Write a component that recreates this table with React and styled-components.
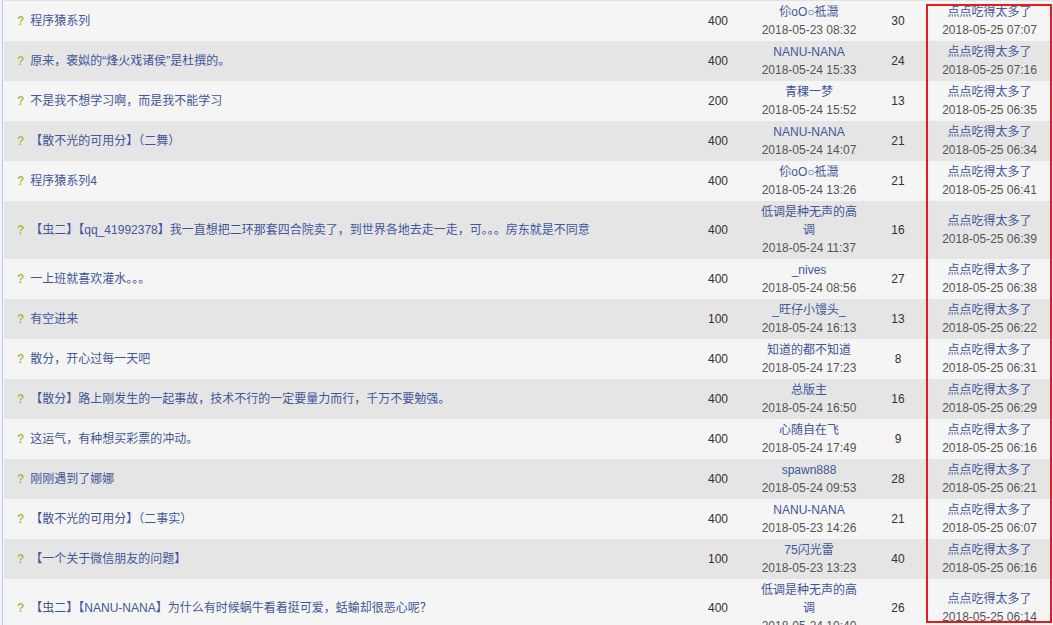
import React from "react";
import styled, { createGlobalStyle } from "styled-components";

const topics = [
  { title: "程序猿系列", points: 400, user: "伱oO○祗灊", time: "2018-05-23 08:32", replies: 30, last: "07:07" },
  { title: "原来，褒姒的“烽火戏诸侯”是杜撰的。", points: 400, user: "NANU-NANA", time: "2018-05-24 15:33", replies: 24, last: "07:16" },
  { title: "不是我不想学习啊，而是我不能学习", points: 200, user: "青稞一梦", time: "2018-05-24 15:52", replies: 13, last: "06:35" },
  { title: "【散不光的可用分】（二舞）", points: 400, user: "NANU-NANA", time: "2018-05-24 14:07", replies: 21, last: "06:34" },
  { title: "程序猿系列4", points: 400, user: "伱oO○祗灊", time: "2018-05-24 13:26", replies: 21, last: "06:41" },
  { title: "【虫二】【qq_41992378】我一直想把二环那套四合院卖了，到世界各地去走一走，可。。。房东就是不同意", points: 400, user: "低调是种无声的高调", time: "2018-05-24 11:37", replies: 16, last: "06:39" },
  { title: "一上班就喜欢灌水。。。", points: 400, user: "_nives", time: "2018-05-24 08:56", replies: 27, last: "06:38" },
  { title: "有空进来", points: 100, user: "_旺仔小馒头_", time: "2018-05-24 16:13", replies: 13, last: "06:22" },
  { title: "散分，开心过每一天吧", points: 400, user: "知道的都不知道", time: "2018-05-24 17:23", replies: 8, last: "06:31" },
  { title: "【散分】路上刚发生的一起事故，技术不行的一定要量力而行，千万不要勉强。", points: 400, user: "总版主", time: "2018-05-24 16:50", replies: 16, last: "06:29" },
  { title: "这运气，有种想买彩票的冲动。", points: 400, user: "心随自在飞", time: "2018-05-24 17:49", replies: 9, last: "06:16" },
  { title: "刚刚遇到了娜娜", points: 400, user: "spawn888", time: "2018-05-24 09:53", replies: 28, last: "06:21" },
  { title: "【散不光的可用分】（二事实）", points: 400, user: "NANU-NANA", time: "2018-05-23 14:26", replies: 21, last: "06:07" },
  { title: "【一个关于微信朋友的问题】", points: 100, user: "75闪光雷", time: "2018-05-23 13:23", replies: 40, last: "06:16" },
  { title: "【虫二】【NANU-NANA】为什么有时候蜗牛看着挺可爱，蛞蝓却很恶心呢？", points: 400, user: "低调是种无声的高调", time: "2018-05-24 10:40", replies: 26, last: "06:14" },
];

function App() {
  return (
    <>
      <GlobalStyle />
      <Page>
        <List>
          {topics.map((t, i) => (
            <Row key={i} $odd={i % 2 === 1}>
              <TitleCell>
                <Mark>?</Mark>
                <Title>{t.title}</Title>
              </TitleCell>
              <NumCell>{t.points}</NumCell>
              <UserCell>
                <UserName>{t.user}</UserName>
                <Time>{t.time}</Time>
              </UserCell>
              <NumCell $shift>{t.replies}</NumCell>
              <UserCell $wide>
                <UserName>点点吃得太多了</UserName>
                <Time>2018-05-25 {t.last}</Time>
              </UserCell>
            </Row>
          ))}
        </List>
        <Highlight />
      </Page>
    </>
  );
}

export default App;

const GlobalStyle = createGlobalStyle`
  html, body {
    margin: 0;
    padding: 0;
    background: #f5f5f5;
    overflow: hidden;
  }
  body {
    font-family: "Liberation Sans", "Noto Sans CJK SC", sans-serif;
    font-size: 12px;
  }
`;

const Page = styled.div`
  position: relative;
  width: 1053px;
  height: 625px;
  overflow: hidden;
  padding-left: 2px;
  box-sizing: border-box;
`;

const List = styled.div`
  border-left: 1px solid #a6c9f0;
  border-top: 1px solid #e3e3e3;
  padding-left: 1px;
  background: #fafafa;
`;

const Row = styled.div`
  display: grid;
  grid-template-columns: 1fr 76px 106px 64px 127px;
  align-items: center;
  min-height: 40px;
  padding: 2px 0;
  box-sizing: border-box;
  background: ${(p) => (p.$odd ? "#e5e5e5" : "#f5f5f5")};
  line-height: 18px;
`;

const TitleCell = styled.div`
  display: flex;
  align-items: center;
  padding-left: 13px;
  gap: 6px;
`;

const Mark = styled.span`
  font-family: "Liberation Sans", sans-serif;
  font-weight: bold;
  font-size: 12px;
  background: linear-gradient(180deg, #8cc63f 30%, #c7b03a 100%);
  -webkit-background-clip: text;
  background-clip: text;
  color: transparent;
`;

const Title = styled.span`
  color: #42569a;
  white-space: nowrap;
`;

const NumCell = styled.div`
  text-align: center;
  color: #333;
  padding-left: ${(p) => (p.$shift ? "8px" : "0")};
`;

const UserCell = styled.div`
  display: flex;
  flex-direction: column;
  align-items: center;
  text-align: center;
  padding: 0 ${(p) => (p.$wide ? "0" : "4px")};
`;

const UserName = styled.div`
  color: #42569a;
`;

const Time = styled.div`
  color: #555;
  white-space: nowrap;
`;

const Highlight = styled.div`
  position: absolute;
  top: 4px;
  left: 926px;
  width: 126px;
  height: 619px;
  border: 2px solid #e41c1c;
  box-sizing: border-box;
  pointer-events: none;
`;
